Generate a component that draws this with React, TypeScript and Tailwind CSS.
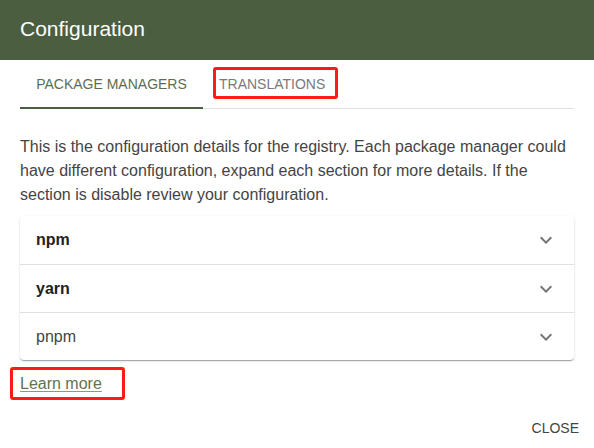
import React from "react";

const Chevron = () => (
  <svg width="24" height="24" viewBox="0 0 24 24" className="fill-[#757575]">
    <path d="M16.59 8.59 12 13.17 7.41 8.59 6 10l6 6 6-6z" />
  </svg>
);

export default function App() {
  const items = [
    { name: "npm", bold: true },
    { name: "yarn", bold: true },
    { name: "pnpm", bold: false },
  ];
  return (
    <div className="w-[594px] h-[448px] bg-white flex flex-col font-['Liberation_Sans',Arial,sans-serif] overflow-hidden">
      <div className="h-[60px] bg-[#4b5e40] flex items-center px-5 pb-[3px]">
        <span className="text-white text-[21px]">Configuration</span>
      </div>
      <div className="mx-5 flex border-b border-[#e0e0e0] h-[49px]">
        <div className="relative w-[183px] flex items-center justify-center text-[14px] text-[#5d6d52] uppercase">
          Package Managers
          <span className="absolute left-0 right-0 bottom-[-1px] h-[2px] bg-[#4b5e40]" />
        </div>
        <div className="relative flex items-center pl-4 pr-4 text-[14px] text-[#7a7a7a] uppercase">
          Translations
          <span className="absolute left-[10px] right-[3px] top-[7px] h-[32px] border-[3px] border-[#ff1a1a] rounded-[3px]" />
        </div>
      </div>
      <p className="mx-5 mt-[26px] text-[16px] leading-[24px] text-[#444]">
        This is the configuration details for the registry. Each package manager could have different configuration, expand each section for more details. If the section is disable review your configuration.
      </p>
      <div className="mx-5 mt-[9px] rounded-[4px] shadow-[0_2px_1px_-1px_rgba(0,0,0,0.2),0_1px_1px_0_rgba(0,0,0,0.14),0_1px_3px_0_rgba(0,0,0,0.12)] flex flex-col">
        {items.map((it, i) => (
          <div
            key={it.name}
            className={`h-[48px] flex items-center justify-between pl-4 pr-4 ${i > 0 ? "border-t border-[#e0e0e0]" : ""}`}
          >
            <span className={`text-[16px] ${it.bold ? "font-bold text-[#222]" : "text-[#444]"}`}>{it.name}</span>
            <Chevron />
          </div>
        ))}
      </div>
      <div className="mx-5 mt-[12px] relative self-start">
        <span className="text-[16px] text-[#5f7352] underline underline-offset-2 decoration-[#8a9a80]">Learn more</span>
        <span className="absolute left-[-10px] right-[-23px] top-[-5px] h-[33px] border-[3px] border-[#ff1a1a] rounded-[3px]" />
      </div>
      <div className="flex-1" />
      <div className="flex justify-end pr-[15px] pb-[9px]">
        <span className="text-[14px] text-[#444] uppercase">Close</span>
      </div>
    </div>
  );
}
